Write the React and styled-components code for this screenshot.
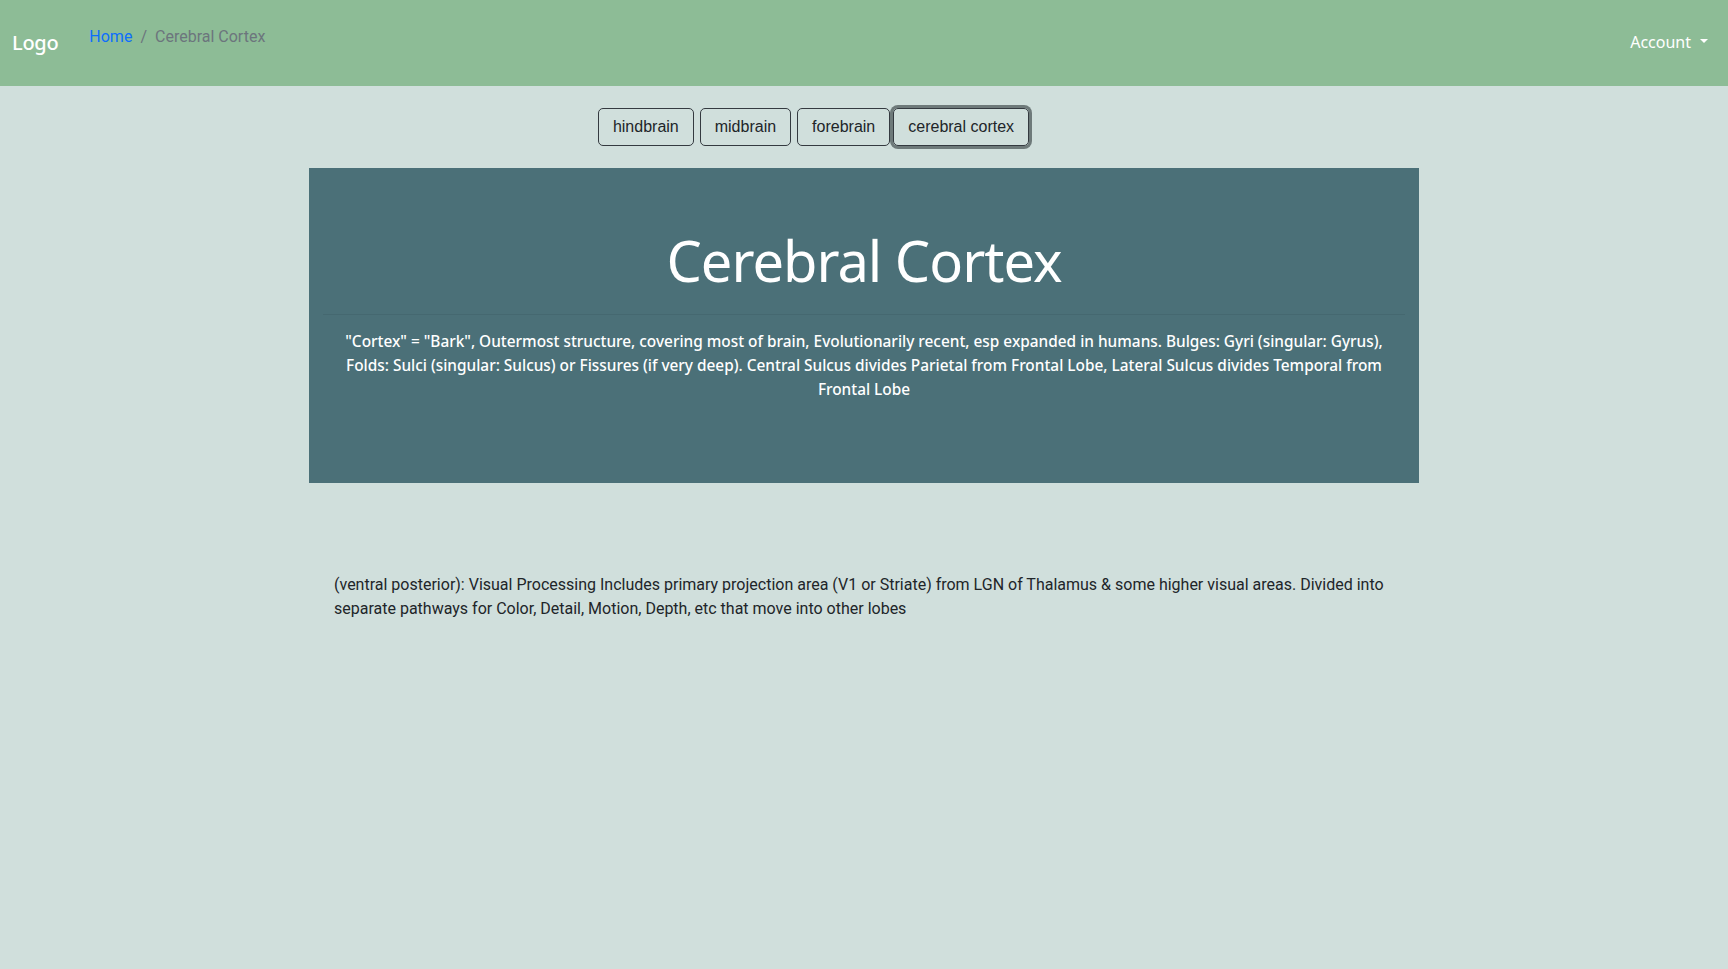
import React, { useState } from "react";
import styled, { createGlobalStyle } from "styled-components";

const GlobalStyle = createGlobalStyle`
  body {
    margin: 0;
    background-color: #d0dfdc;
    font-family: Roboto, "Liberation Sans", sans-serif;
    color: #212529;
  }
`;

const sections = ["hindbrain", "midbrain", "forebrain", "cerebral cortex"];

const App = () => {
  const [active, setActive] = useState("cerebral cortex");

  return (
    <>
      <GlobalStyle />
      <NavBar>
        <NavLeft>
          <Logo>Logo</Logo>
          <Crumbs>
            <CrumbLink href="#">Home</CrumbLink>
            <CrumbSep>/</CrumbSep>
            <CrumbCurrent>Cerebral Cortex</CrumbCurrent>
          </Crumbs>
        </NavLeft>
        <Account>
          Account
          <Caret />
        </Account>
      </NavBar>

      <Main>
        <ButtonRow>
          {sections.map((s) => (
            <TabButton key={s} active={s === active} onClick={() => setActive(s)}>
              {s}
            </TabButton>
          ))}
        </ButtonRow>

        <Panel>
          <Title>Cerebral Cortex</Title>
          <Rule />
          <Lead>
            "Cortex" = "Bark", Outermost structure, covering most of brain,
            Evolutionarily recent, esp expanded in humans. Bulges: Gyri
            (singular: Gyrus), Folds: Sulci (singular: Sulcus) or Fissures (if
            very deep). Central Sulcus divides Parietal from Frontal Lobe,
            Lateral Sulcus divides Temporal from Frontal Lobe
          </Lead>
        </Panel>

        <Detail>
          (ventral posterior): Visual Processing Includes primary projection
          area (V1 or Striate) from LGN of Thalamus &amp; some higher visual
          areas. Divided into separate pathways for Color, Detail, Motion,
          Depth, etc that move into other lobes
        </Detail>
      </Main>
    </>
  );
};

export default App;

const exo = `"Noto Sans", "DejaVu Sans", sans-serif`;

const NavBar = styled.nav`
  display: flex;
  align-items: center;
  justify-content: space-between;
  height: 86px;
  padding: 0 20px 0 12px;
  background-color: #8dbc96;
`;

const NavLeft = styled.div`
  display: flex;
  align-items: center;
  gap: 31px;
  padding-bottom: 7px;
`;

const Logo = styled.div`
  font-family: ${exo};
  font-size: 20px;
  font-weight: 500;
  color: white;
  padding-top: 6px;
  letter-spacing: -0.3px;
`;

const Crumbs = styled.div`
  display: flex;
  align-items: center;
  font-family: Roboto, "Liberation Sans", sans-serif;
  font-size: 16px;
  padding-bottom: 6px;
`;

const CrumbLink = styled.a`
  color: #0d6efd;
  text-decoration: none;
`;

const CrumbSep = styled.span`
  color: #6c757d;
  padding: 0 8px;
`;

const CrumbCurrent = styled.span`
  color: #6c757d;
`;

const Account = styled.div`
  display: flex;
  align-items: center;
  gap: 9px;
  font-family: ${exo};
  font-size: 16px;
  color: white;
  padding-bottom: 3px;
`;

const Caret = styled.span`
  width: 0;
  height: 0;
  border-left: 4.5px solid transparent;
  border-right: 4.5px solid transparent;
  border-top: 4.5px solid white;
  margin-top: -2px;
`;

const Main = styled.main`
  width: 1110px;
  margin: 0 auto;
`;

const ButtonRow = styled.div`
  display: flex;
  justify-content: center;
  gap: 6px;
  padding: 22px 101px 0 0;
`;

const TabButton = styled.button`
  height: 38px;
  padding: 0 14px;
  font-family: "Liberation Sans", Arial, sans-serif;
  font-size: 16px;
  color: #212529;
  background-color: transparent;
  border: 1px solid #343a40;
  border-radius: 5px;
  cursor: pointer;
  box-shadow: ${(p) => (p.active ? "0 0 0 3px #6e7a7a" : "none")};
  margin-left: ${(p) => (p.active ? "-3px" : "0")};
`;

const Panel = styled.section`
  margin-top: 22px;
  height: 315px;
  box-sizing: border-box;
  padding: 54px 14px 0;
  background-color: #4b7078;
  color: white;
  text-align: center;
`;

const Title = styled.h1`
  margin: 0;
  font-family: ${exo};
  font-weight: 400;
  font-size: 56px;
  line-height: 76px;
  letter-spacing: -1px;
`;

const Rule = styled.hr`
  margin: 16px 0 0;
  border: 0;
  border-top: 1px solid #456870;
`;

const Lead = styled.p`
  margin: 15px 0 0;
  padding: 0 10px;
  font-family: ${exo};
  font-size: 15.4px;
  font-weight: 500;
  line-height: 24px;
  letter-spacing: 0;
`;

const Detail = styled.p`
  margin: 90px 0 0;
  padding: 0 25px;
  font-size: 16px;
  line-height: 24px;
  color: #212529;
`;
